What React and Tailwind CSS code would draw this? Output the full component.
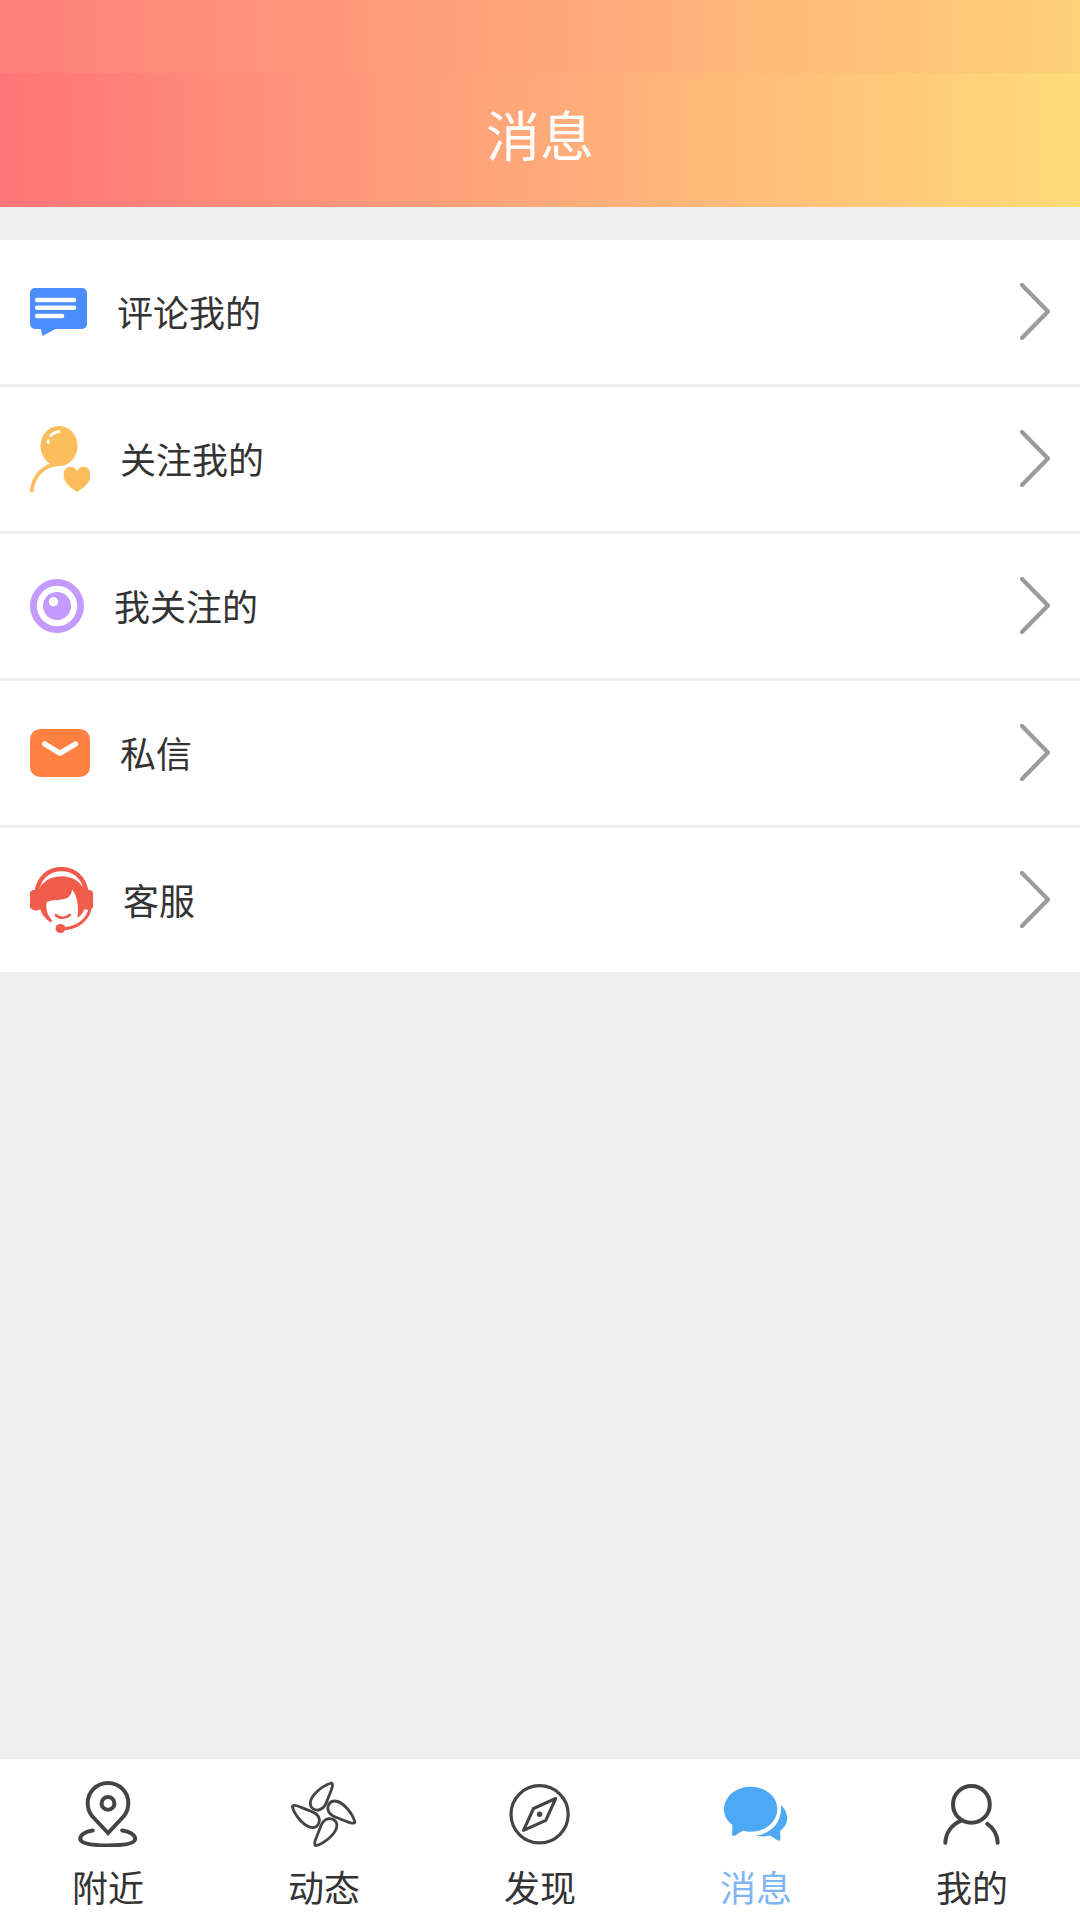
import React, { useState } from 'react';

function CommentIcon() {
  return (
    <svg width="57" height="48" viewBox="0 0 57 48" fill="none">
      <path d="M5 0H52a5 5 0 0 1 5 5V36a5 5 0 0 1-5 5H25.5L12.5 48L10.8 41H5a5 5 0 0 1-5-5V5a5 5 0 0 1 5-5Z" fill="#4c8dfd" />
      <path d="M7.200 12H44M7.200 19.800H44M7.200 28H32" stroke="#fff" strokeWidth="4.600" strokeLinecap="round" />
    </svg>
  );
}

function FollowerIcon() {
  return (
    <svg width="60" height="66" viewBox="0 0 60 66" fill="none">
      <ellipse cx="29" cy="20" rx="18.5" ry="20" fill="#fcbe5c" />
      <path d="M1.8 66C2.5 50 14 38.5 28 38.3" stroke="#fcbe5c" strokeWidth="3.8" />
      <path d="M47 45C43.5 38.5 33.5 39.5 33.5 49C33.5 57 41 62 47.2 66C53.5 62 60.5 57 60.5 49C60.5 39.5 50.5 38.5 47 45Z" fill="#fcbe5c" />
      <path d="M20.5 9.8C22.8 7.3 25.8 6 29 5.6" stroke="#fff" strokeWidth="2.6" strokeLinecap="round" />
      <ellipse cx="18.2" cy="15.5" rx="1.5" ry="2.5" fill="#fff" />
    </svg>
  );
}

function FollowingIcon() {
  return (
    <svg width="54" height="54" viewBox="0 0 54 54">
      <circle cx="27" cy="27" r="27" fill="#c39afe" />
      <circle cx="27" cy="27" r="20.2" fill="#fff" />
      <circle cx="27" cy="27" r="14" fill="#c39afe" />
      <circle cx="23.5" cy="22.8" r="4.7" fill="#fff" />
    </svg>
  );
}

function MailIcon() {
  return (
    <svg width="60" height="48" viewBox="0 0 60 48" fill="none">
      <rect width="60" height="48" rx="10" fill="#ff8142" />
      <path d="M14.8 15L30 24.3L45.5 15" stroke="#fff" strokeWidth="5.4" strokeLinecap="round" strokeLinejoin="round" />
    </svg>
  );
}

function ServiceIcon() {
  return (
    <svg width="63" height="66" viewBox="0 0 63 66" fill="none">
      <path d="M6.5 25C9 10 19 2.1 31.5 2.1S54 10 56.5 25" stroke="#f15b4b" strokeWidth="4.4" />
      <path d="M0 25.5C1 23 5 22.5 8.5 23C13 14 21 9.2 31.5 9.2S50 14 54.500 23C58 22.5 62 23 63 25.5V40C62 42.5 58 43.8 54.5 42C53 46 50.5 49 47.5 51C48.5 44 48.5 30 42 22.3C42 27 39.5 30.5 35 31.8C29 33.5 21 32.5 16.5 35.5C15.5 43 18 49 22.5 54L20.5 55.2C15.5 52.5 12 48 10.2 42C7 44.5 1.5 43.8 0 40Z" fill="#f15b4b" />
      <path d="M26 48.3C30 51.5 35.5 51.5 39.7 48" stroke="#f15b4b" strokeWidth="2.8" strokeLinecap="round" />
      <path d="M60 42C57.5 53 47 61.5 32 61.7" stroke="#f15b4b" strokeWidth="3.1" />
      <ellipse cx="30.5" cy="61.5" rx="4.9" ry="4.5" fill="#f15b4b" />
    </svg>
  );
}

function ArrowIcon() {
  return (
    <svg width="30" height="57" viewBox="0 0 30 57" fill="none" className="mb-0.5 ml-auto shrink-0">
      <path d="M2 2L28 28.5L2 55" stroke="#9b9b9b" strokeWidth="4.2" strokeLinecap="round" />
    </svg>
  );
}

function NearbyIcon() {
  return (
    <svg width="66" height="66" viewBox="0 0 66 66" fill="none" stroke="#444" strokeWidth="4" strokeLinecap="round">
      <path d="M33 52L17.5 35.5C14 31.5 12.7 27 12.7 22.3C12.7 11 21.5 2 33 2S53.3 11 53.3 22.3C53.3 27 52 31.5 48.5 35.5Z" />
      <circle cx="33" cy="22.4" r="6.4" />
      <path d="M17.7 49.4C10 50.5 5.2 54 5.2 57.8C5.2 62.5 16 64.4 33 64.4S60.2 62.5 60.2 57.8C60.2 54 55 50.5 47.2 49.4" />
    </svg>
  );
}

function MomentsIcon() {
  const petal = 'M40.5 2C31 4.500 19.3 14.5 19.3 22.3C19.3 27 23.5 29.4 27.5 29C33.5 28.3 35.5 21.5 37.5 16C39 12 43.5 3 40.5 2Z';
  return (
    <svg width="66" height="66" viewBox="0 0 66 66" fill="none" stroke="#444" strokeWidth="2.800" strokeLinejoin="round">
      <path d={petal} />
      <path d={petal} transform="rotate(90 32.6 33.3)" />
      <path d={petal} transform="rotate(180 32.6 33.3)" />
      <path d={petal} transform="rotate(270 32.6 33.3)" />
    </svg>
  );
}

function DiscoverIcon() {
  return (
    <svg width="66" height="66" viewBox="0 0 66 66" fill="none" stroke="#444" strokeLinejoin="round">
      <circle cx="32.6" cy="33.3" r="28.6" strokeWidth="3.2" />
      <path d="M48.7 17.5L26.5 27.5L16.5 49.3L38.8 39.3Z" strokeWidth="3.1" />
      <circle cx="32.6" cy="33.3" r="2.7" fill="#444" stroke="none" />
    </svg>
  );
}

function MessageIcon() {
  return (
    <svg width="66" height="66" viewBox="0 0 66 66" fill="#4da9f6">
      <path d="M27.7 5.7C42.5 5.7 54.3 15.5 54.3 28.2S42.5 50.7 27.7 50.7C25 50.7 22.5 50.3 20 49.7C17 51 14 53.5 11.5 54.7C9.8 55.3 9 54.5 9.1 53L9.5 44C4 40 1 34.5 1 28.2C1 15.5 13 5.7 27.7 5.7Z" />
      <path d="M58 24C62 28 64.2 32.5 64.2 37.3C64.2 42.5 61.5 46.8 57 50L57.5 57.5C57.6 59.3 56.5 60.2 55 59.5C52 58 50 56 47 54.6C42 55.8 37 55.7 33 54.5C46 53.5 59.5 43 58 24Z" />
    </svg>
  );
}

function ProfileIcon() {
  return (
    <svg width="66" height="66" viewBox="0 0 66 66" fill="none" stroke="#444" strokeWidth="4" strokeLinecap="round">
      <circle cx="32.4" cy="23.4" r="18.4" />
      <path d="M22.3 39.7C13 43.5 6.8 51.5 6.3 61.8" />
      <path d="M48.3 42.8C54.5 47 58.3 54 58.7 61.8" />
    </svg>
  );
}

const menuItems = [
  { label: '评论我的', icon: CommentIcon },
  { label: '关注我的', icon: FollowerIcon },
  { label: '我关注的', icon: FollowingIcon },
  { label: '私信', icon: MailIcon },
  { label: '客服', icon: ServiceIcon },
];

const tabs = [
  { label: '附近', icon: NearbyIcon },
  { label: '动态', icon: MomentsIcon },
  { label: '发现', icon: DiscoverIcon },
  { label: '消息', icon: MessageIcon },
  { label: '我的', icon: ProfileIcon },
];

export default function App() {
  const [activeTab, setActiveTab] = useState('消息');

  return (
    <div className="flex h-[1920px] w-[1080px] flex-col overflow-hidden bg-[#eee] font-['Noto_Sans_CJK_SC',sans-serif] text-[#333]">
      {/* Status bar + title */}
      <header className="shrink-0 text-white">
        <div className="h-[73px] bg-linear-to-r from-[#ff7f7b] via-[#ffa67a] to-[#ffd179]" />
        <div className="flex h-[134px] items-center justify-center bg-linear-to-r from-[#ff7479] via-[#ffa97a] to-[#ffdb79] pb-3">
          <h1 className="text-[54px] leading-none font-normal">消息</h1>
        </div>
      </header>

      {/* Menu */}
      <ul className="mt-[33px] flex flex-col gap-[3px]">
        {menuItems.map(({ label, icon: Icon }) => (
          <li key={label} className="flex h-36 items-center bg-white px-[30px]">
            <Icon />
            <span className="mb-0.5 ml-[30px] text-4xl leading-none">{label}</span>
            <ArrowIcon />
          </li>
        ))}
      </ul>

      {/* Tab bar */}
      <nav className="mt-auto grid h-[161px] shrink-0 grid-cols-5 bg-white">
        {tabs.map(({ label, icon: Icon }) => (
          <button
            key={label}
            onClick={() => setActiveTab(label)}
            className={`flex flex-col items-center pt-[22px] ${activeTab === label ? 'text-[#7fb6f2]' : 'text-[#333]'}`}
          >
            <Icon />
            <span className="mt-[21px] text-4xl leading-none">{label}</span>
          </button>
        ))}
      </nav>
    </div>
  );
}
